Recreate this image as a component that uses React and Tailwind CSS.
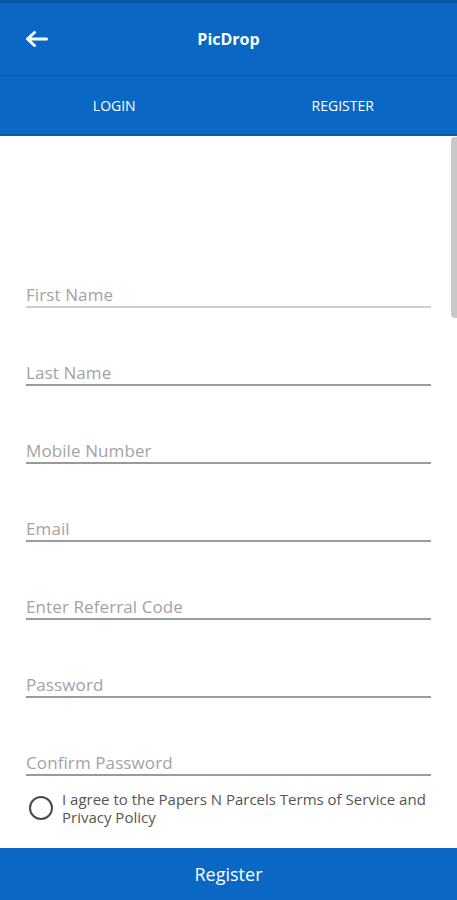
import React from "react";

const fields = [
  "First Name",
  "Last Name",
  "Mobile Number",
  "Email",
  "Enter Referral Code",
  "Password",
  "Confirm Password",
];

export default function App() {
  return (
    <div
      className="relative flex h-[900px] w-[457px] flex-col overflow-hidden bg-white"
      style={{ fontFamily: "'Open Sans', Roboto, sans-serif" }}
    >
      <div className="h-[3px] bg-[#0556a6]" />
      <div className="relative flex h-[73px] items-center border-b border-[#0960b8] bg-[#0a68c4] px-[25px]">
        <svg width="23" height="16" viewBox="0 0 23 16" className="absolute left-[25px]">
          <path d="M21.5 8H3M9.5 1.5L2.5 8l7 6.5" stroke="white" strokeWidth="3" fill="none" strokeLinecap="round" strokeLinejoin="round" />
        </svg>
        <div className="flex-1 text-center text-[16px] font-bold text-white">PicDrop</div>
      </div>
      <div className="flex h-[60px] items-center border-b-2 border-[#0858ad] bg-[#0a68c4] text-[14px] font-medium text-white">
        <div className="flex-1 text-center">LOGIN</div>
        <div className="flex-1 text-center">REGISTER</div>
      </div>
      <div className="flex flex-1 flex-col px-[26px] pt-[94px]">
        {fields.map((f, i) => (
          <div key={f} className="flex h-[78px] items-end">
            <div
              className={
                "w-full border-b-2 pb-[1px] text-[17px] leading-[20px] tracking-[0.1px] text-[#a3a3a3] " +
                (i === 0 ? "border-[#cfcfcf]" : "border-[#9a9a9a]")
              }
            >
              {f}
            </div>
          </div>
        ))}
        <div className="mt-[14px] flex items-center gap-[9px] pl-[3px]">
          <div className="h-[24px] w-[24px] shrink-0 rounded-full border-2 border-[#4a4a4a]" />
          <div className="text-[15px] leading-[18px] text-[#555]">
            I agree to the Papers N Parcels Terms of Service and Privacy Policy
          </div>
        </div>
      </div>
      <div className="flex h-[52px] items-center justify-center bg-[#0a68c4] text-[18px] text-white">
        Register
      </div>
      <div className="absolute right-0 top-[137px] h-[181px] w-[6px] rounded-l-[4px] bg-[#c8c8c8]" />
    </div>
  );
}
